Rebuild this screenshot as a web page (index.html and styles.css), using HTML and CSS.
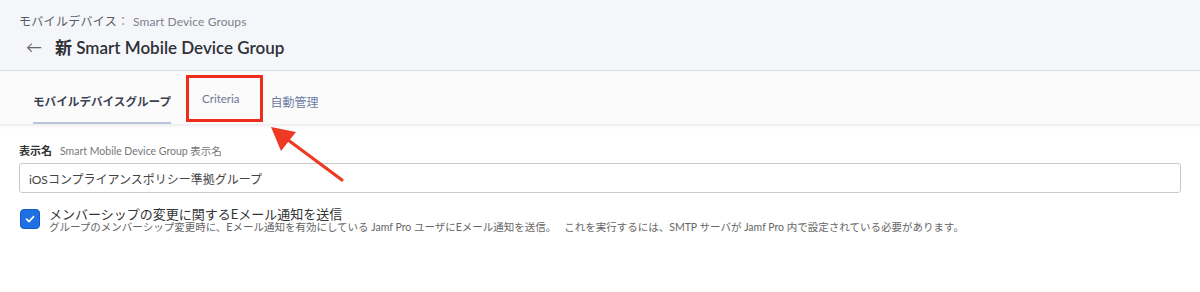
FILE: index.html
```html
<!DOCTYPE html>
<html lang="ja">
  <head>
    <meta charset="UTF-8" />
    <meta name="viewport" content="width=device-width, initial-scale=1.0" />
    <title>新 Smart Mobile Device Group</title>
    <link rel="stylesheet" href="styles.css">
  </head>
  <body>
    <div class="page-header">
      <div class="breadcrumb">
        <span class="crumb-main">モバイルデバイス</span>
        <span class="crumb-sep">：</span>
        <span class="crumb-sub">Smart Device Groups</span>
      </div>
      <div class="title-row">
        <span class="back-arrow">&larr;</span>
        <h1>新 Smart Mobile Device Group</h1>
      </div>
    </div>
    <div class="tabs">
      <div class="tab active">モバイルデバイスグループ</div>
      <div class="tab criteria">Criteria</div>
      <div class="tab">自動管理</div>
    </div>
    <div class="form">
      <div class="field-label">
        <span class="label-main">表示名</span>
        <span class="label-hint">Smart Mobile Device Group 表示名</span>
      </div>
      <input class="text-input" type="text" value="iOSコンプライアンスポリシー準拠グループ" />
      <div class="check-row">
        <span class="checkbox">
          <svg width="12" height="12" viewBox="0 0 12 12"><path d="M2.5 6.2 L5 8.6 L9.6 3.6" fill="none" stroke="#fff" stroke-width="1.6" stroke-linecap="round" stroke-linejoin="round"/></svg>
        </span>
        <div class="check-text">
          <div class="check-title">メンバーシップの変更に関するEメール通知を送信</div>
          <div class="check-desc">グループのメンバーシップ変更時に、Eメール通知を有効にしている Jamf Pro ユーザにEメール通知を送信。　 これを実行するには、SMTP サーバが Jamf Pro 内で設定されている必要があります。</div>
        </div>
      </div>
    </div>

    <!-- annotation -->
    <div class="mark-box"></div>
    <svg class="mark-arrow" width="1200" height="292" viewBox="0 0 1200 292">
      <line x1="342" y1="180" x2="284" y2="137" stroke="#ee3a24" stroke-width="3.2" stroke-linecap="round"/>
      <polygon points="271,127 296,132 281,151" fill="#ee3a24"/>
    </svg>
  </body>
</html>
```

FILE: styles.css
```css
* {
  margin: 0;
  padding: 0;
  box-sizing: border-box;
}
body {
  font-family: Lato, "Noto Sans CJK JP", sans-serif;
  background: #fff;
  color: #333;
  width: 1200px;
  height: 292px;
  overflow: hidden;
}
.page-header {
  background: #f5f6f9;
  height: 71px;
  border-bottom: 1px solid #d9dadf;
  padding: 13px 19px 0;
}
.breadcrumb {
  font-size: 12px;
  line-height: 18px;
  display: flex;
}
.crumb-main {
  color: #555a66;
  letter-spacing: 0.3px;
}
.crumb-sep {
  color: #8a8e99;
  width: 12px;
  margin-right: 4px;
}
.crumb-sub {
  color: #7d818c;
  font-size: 12px;
  letter-spacing: 0.1px;
}
.title-row {
  display: flex;
  align-items: center;
  margin-top: 3px;
}
.back-arrow {
  color: #666;
  font-size: 16px;
  margin-left: 7px;
  width: 29px;
}
h1 {
  font-size: 17px;
  font-weight: 600;
  color: #2e3038;
}
.tabs {
  height: 54px;
  background: #fbfbfc;
  display: flex;
  padding-left: 33px;
  box-shadow: 0 2px 3px rgba(0, 0, 0, 0.05);
  border-bottom: 1px solid #eceef2;
}
.tab {
  font-size: 12px;
  color: #6e7ba3;
  display: flex;
  align-items: center;
  padding-top: 8px;
  margin-right: 31px;
}
.tab.active {
  font-size: 11.6px;
  font-weight: 700;
  color: #3c4152;
  border-bottom: 2px solid #b7c3d8;
}
.tab.criteria {
  font-size: 11.5px;
  color: #6f7591;
  padding-top: 2px;
}
.form {
  padding: 18px 19px 0;
}
.field-label {
  display: flex;
  align-items: baseline;
  gap: 8px;
  line-height: 16px;
}
.label-main {
  font-size: 11px;
  font-weight: 700;
  color: #333;
}
.label-hint {
  font-size: 10.5px;
  color: #777;
}
.text-input {
  display: block;
  width: 1162px;
  height: 30px;
  margin-top: 4px;
  border: 1px solid #c9c9c9;
  border-radius: 3px;
  padding: 0 9px;
  font-family: Lato, "Noto Sans CJK JP", sans-serif;
  font-size: 12px;
  color: #444;
}
.check-row {
  display: flex;
  gap: 9px;
  margin-top: 14px;
}
.checkbox {
  width: 20px;
  height: 20px;
  margin-top: 2px;
  margin-left: 1px;
  border-radius: 4px;
  background: #1f6fe5;
  border: 1px solid #175ac0;
  display: flex;
  align-items: center;
  justify-content: center;
}
.check-title {
  font-size: 13px;
  line-height: 14px;
  color: #333;
}
.check-desc {
  font-size: 10.5px;
  line-height: 13px;
  color: #666;
}
.mark-box {
  position: absolute;
  left: 186px;
  top: 75px;
  width: 77px;
  height: 47px;
  border: 3px solid #ee2d1c;
}
.mark-arrow {
  position: absolute;
  left: 0;
  top: 0;
  pointer-events: none;
}
```
